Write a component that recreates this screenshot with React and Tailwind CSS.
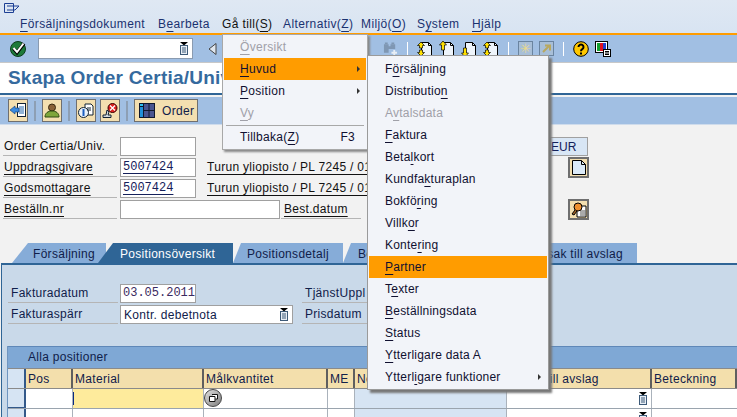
import React from "react";

const U = ({ children }) => <span className="underline decoration-1 underline-offset-[3px]">{children}</span>;

const Pad = ({ className = "" }) => (
  <svg width="10" height="13" viewBox="0 0 10 13" className={className}>
    <path d="M1 0h8L5 3.500z" fill="#000" />
    <rect x="1.500" y="3.500" width="7" height="9" fill="#e8eef5" stroke="#3d5a78" />
    <path d="M3 6h4M3 8h4M3 10h4" stroke="#3d5a78" />
  </svg>
);

const Check = () => (
  <svg width="18" height="18" viewBox="0 0 18 18">
    <circle cx="9" cy="9" r="7.500" fill="#1d7a3a" stroke="#0c3d1c" />
    <path d="M4.500 8.500l3.500 4L15 3.500" fill="none" stroke="#000" strokeWidth="3.400" />
    <path d="M4.500 8l3.500 4L14.500 3.500" fill="none" stroke="#fff" strokeWidth="2" />
  </svg>
);

const Doc = ({ arrow }) => (
  <svg width="16" height="16" viewBox="0 0 16 16">
    <path d="M4.500 1.500h7l3 3v10h-10z" fill="#eef4fb" stroke="#000" />
    <path d="M11.500 1.500v3h3" fill="none" stroke="#000" />
    {(arrow === "up" || arrow === "both") && <path d={arrow === "both" ? "M4 1l3.500 3.500H5.500V7h-3V4.500H.5z" : "M4 0l3.500 4H5.500v5h-3V4H.5z"} fill="#ffe000" stroke="#000" strokeWidth=".7" />}
    {(arrow === "down" || arrow === "both") && <path d={arrow === "both" ? "M4 15L.5 11.500h2V9h3v2.500h2z" : "M4 16L.5 12h2V7h3v5h2z"} fill="#ffe000" stroke="#000" strokeWidth=".7" />}
  </svg>
);

const Btn = ({ children, className = "w-[20px]" }) => (
  <div className={`h-[23px] flex items-center justify-center bg-[#f3dfb0] border border-[#6f6f6f] ${className}`}>{children}</div>
);

const Sep = ({ className = "h-[20px] bg-[#7f8c9c]" }) => <div className={`w-[2px] ${className}`} />;

const Lbl = ({ children, w = "w-[114px]", cls = "" }) => (
  <div className={`${w} ${cls} h-[19px] border-b border-[#b5b5b5] pl-[1px] leading-[19px] whitespace-nowrap overflow-hidden shrink-0`}>{children}</div>
);

const Input = ({ children, w = "w-[76px]", cls = "" }) => (
  <div className={`${w} ${cls} h-[19px] bg-white border border-[#a0a0a0] pl-[2px] font-['Liberation_Mono',monospace] text-[12px] tracking-normal leading-[17px] text-[#14205a] shrink-0 overflow-hidden`}>{children}</div>
);

const Tab = ({ children, w, active, cls = "" }) => (
  <div className={`${w} ${cls} h-[20px] shrink-0 leading-[22px] whitespace-nowrap overflow-hidden ${active ? "bg-[#2f6596] text-white" : "bg-[#86acd8] text-[#10204a]"}`}>{children}</div>
);

const Item = ({ children, active, disabled, arrow, right }) => (
  <div className={`h-[22px] pl-[16px] pr-[6px] flex items-center justify-between leading-[22px] ${active ? "bg-[#ff9c00]" : ""} ${disabled ? "text-[#a0a0a8]" : "text-[#101030]"}`}>
    <span>{children}</span>
    {arrow && <span className="w-0 h-0 border-y-[3px] border-y-transparent border-l-[3px] border-l-[#333]" />}
    {right && <span className="pr-[5px]">{right}</span>}
  </div>
);

const HCell = ({ children, cls = "" }) => (
  <div className={`h-[19px] bg-[#f3dfac] border-r-[2px] border-[#5f5f5f] pl-[2px] leading-[20px] overflow-hidden whitespace-nowrap text-[#10204a] ${cls}`}>{children}</div>
);

const grid = "grid grid-cols-[18px_47px_131px_124px_27px_152px_145px_1fr]";

export default function App() {
  return (
    <div className="relative w-[737px] h-[417px] overflow-hidden bg-[#f2f2f2] font-['Liberation_Sans',Arial,sans-serif] text-[12px] tracking-[0.3px] text-[#111] flex flex-col">
      {/* menu bar */}
      <div className="h-[35px] shrink-0 bg-gradient-to-b from-[#dfe8f3] to-[#d8e4f2] border-b-[2px] border-[#ff9c00] relative text-[#1a3270] tracking-[0.38px]">
        <svg width="16" height="11" viewBox="0 0 16 11" className="absolute left-[4px] top-[3px]">
          <path d="M.5.500h9v9h-9zM3 3h12l-4 4H3" fill="none" stroke="#1c3f94" />
        </svg>
        <div className="flex pt-[16px] pl-[20px] leading-[16px] whitespace-nowrap">
          <span className="w-[138px]"><U>F</U>örsäljningsdokument</span>
          <span className="w-[64px]">B<U>e</U>arbeta</span>
          <span className="w-[61px] text-[#111]">Gå till(<U>S</U>)</span>
          <span className="w-[78px]">Alternativ(<U>Z</U>)</span>
          <span className="w-[56px]">Miljö(<U>O</U>)</span>
          <span className="w-[55px]">S<U>y</U>stem</span>
          <span><U>H</U>jälp</span>
        </div>
      </div>

      {/* system toolbar */}
      <div className="h-[27px] shrink-0 bg-[#a1bfe3] flex items-center pl-[9px]">
        <Check />
        <div className="ml-[11px] w-[155px] h-[21px] bg-white border border-[#8a9bb0] flex items-center justify-end pr-[3px]"><Pad /></div>
        <svg width="9" height="12" viewBox="0 0 9 12" className="ml-[15px]"><path d="M8 .5v11L1 6z" fill="#dfe6ee" stroke="#444" /></svg>
        <div className="ml-[166px] w-[15px] flex justify-center">
          <svg width="16" height="16" viewBox="0 0 16 16"><path d="M1 3h5v9H1zM8 3h5v5H8z" fill="#7f97b3" /><path d="M2 1h3v2H2zM9 1h3v2H9zM5 5h4v3H5z" fill="#7f97b3" /><path d="M11 9h2v2h2v2h-2v2h-2v-2H9v-2h2z" fill="#e8eef5" /></svg>
        </div>
        <Sep className="h-[14px] bg-white ml-[9px] !w-[1px]" />
        <div className="ml-[9px]"><Doc arrow="both" /></div>
        <div className="ml-[6px]"><Doc arrow="up" /></div>
        <div className="ml-[6px]"><Doc arrow="down" /></div>
        <div className="ml-[6px]"><Doc arrow="both" /></div>
        <Sep className="h-[14px] bg-white ml-[9px] !w-[1px]" />
        <div className="ml-[9px] w-[15px] h-[15px] border border-[#6a84a0] bg-[#a8bfd8] flex items-center justify-center text-[#e8d98a] text-[13px] leading-none tracking-normal">✳</div>
        <div className="ml-[6px] w-[15px] h-[15px] border border-[#6a84a0] bg-[#a8bfd8] flex items-center justify-center">
          <svg width="11" height="11" viewBox="0 0 11 11"><path d="M2 9l6-6M4 2.500h5v5" fill="none" stroke="#b8a860" strokeWidth="2" /></svg>
        </div>
        <Sep className="h-[14px] bg-white ml-[9px] !w-[1px]" />
        <svg width="16" height="16" viewBox="0 0 16 16" className="ml-[9px]">
          <circle cx="8" cy="8" r="7.300" fill="#ffc800" stroke="#000" />
          <path d="M5.500 6a2.500 2.500 0 1 1 3.800 2.200c-1 .6-1.300 1-1.300 2" fill="none" stroke="#000" strokeWidth="2" />
          <rect x="7" y="11.500" width="2" height="2" fill="#000" />
        </svg>
        <svg width="16" height="16" viewBox="0 0 16 16" className="ml-[6px]">
          <rect x=".5" y=".5" width="12" height="11" fill="#fff" stroke="#000" />
          <rect x="2" y="2" width="3" height="8" fill="#12a030" /><rect x="5" y="2" width="3" height="8" fill="#e01020" /><rect x="8" y="2" width="3" height="8" fill="#2040d0" />
          <rect x="8.500" y="8.500" width="7" height="7" fill="#fff" stroke="#000" /><path d="M10 10.500h4M10 12h4M10 13.500h4" stroke="#000" />
        </svg>
      </div>

      {/* title */}
      <div className="h-[33px] shrink-0 bg-white border-t border-[#c8c8c8] border-b-[2px] border-b-[#2f6596] pl-[8px] text-[#356a9e] font-bold text-[19px] tracking-[0.2px] leading-[30px] whitespace-nowrap">
        Skapa Order Certia/Univ
      </div>

      {/* application toolbar */}
      <div className="mt-[2px] h-[28px] shrink-0 bg-[#a1bfe3] border-b border-[#cfdcec] flex items-center pl-[8px] text-[#10204a]">
        <Btn>
          <svg width="16" height="15" viewBox="0 0 16 15"><rect x="7.500" y=".5" width="8" height="13" fill="#fff" stroke="#123" /><path d="M9 4h5M9 6h5M9 8h5M9 10h5" stroke="#26a" /><path d="M0 7l5-4v2h4v4H5v2z" fill="#3b8be0" stroke="#0a3a7a" strokeWidth=".6" /></svg>
        </Btn>
        <Sep className="h-[20px] bg-[#8d9fb4] ml-[6px] !w-[2px]" />
        <Btn className="w-[20px] ml-[6px]">
          <svg width="16" height="15" viewBox="0 0 16 15"><circle cx="8" cy="4.500" r="3.500" fill="#8a6238" stroke="#3a2a10" /><path d="M1 14c0-4 3-6 7-6s7 2 7 6z" fill="#7ea63a" stroke="#2d4a10" /></svg>
        </Btn>
        <Sep className="h-[20px] bg-[#8d9fb4] ml-[6px] !w-[2px]" />
        <Btn className="w-[20px] ml-[6px]">
          <svg width="16" height="16" viewBox="0 0 16 16"><path d="M7 1h6l2 2v9H7z" fill="#fff" stroke="#123" /><circle cx="5.500" cy="9.500" r="5" fill="#eaf2fb" stroke="#123" /><path d="M5.500 6v7" stroke="#1b5fc0" strokeWidth="2" /><path d="M9 5h4M9 7h4" stroke="#123" /></svg>
        </Btn>
        <Btn className="w-[20px] ml-[4px]">
          <svg width="16" height="16" viewBox="0 0 16 16"><circle cx="10.500" cy="5" r="4.500" fill="#e02020" stroke="#300" /><path d="M8 2.500l5 5M13 2.500l-5 5" stroke="#fff" strokeWidth="1.300" /><path d="M5 7l2 2-1 3h3v2.500H1V12h3z" fill="#cfd8e0" stroke="#123" /></svg>
        </Btn>
        <Sep className="h-[20px] bg-[#8d9fb4] ml-[6px] !w-[2px]" />
        <Btn className="w-[64px] ml-[6px] !justify-start pl-[4px] gap-[7px]">
          <svg width="16" height="15" viewBox="0 0 16 15"><rect width="16" height="15" fill="#10182e" /><rect x="1" y="1" width="3" height="2" fill="#2fc0f0" /><rect x="1" y="4" width="3" height="10" fill="#2090d8" /><rect x="5" y="1" width="4.500" height="6" fill="#4a5590" /><rect x="10.500" y="1" width="4.500" height="6" fill="#4a5590" /><rect x="5" y="8" width="4.500" height="6" fill="#4a5590" /><rect x="10.500" y="8" width="4.500" height="6" fill="#4a5590" /></svg>
          Order
        </Btn>
      </div>

      {/* header form */}
      <div className="h-[118px] shrink-0 relative pt-[12px] pl-[3px]">
        <div className="flex gap-[3px]"><Lbl>Order Certia/Univ.</Lbl><Input /></div>
        <div className="mt-[2px] flex gap-[3px] items-start">
          <Lbl><U>Uppdragsgivare</U></Lbl><Input><U>5007424</U></Input>
          <span className="ml-[8px] leading-[19px] whitespace-nowrap"><U>Turun yliopisto / PL 7245 / 010</U></span>
        </div>
        <div className="mt-[2px] flex gap-[3px] items-start">
          <Lbl><U>Godsmottagare</U></Lbl><Input><U>5007424</U></Input>
          <span className="ml-[8px] leading-[19px] whitespace-nowrap"><U>Turun yliopisto / PL 7245 / 010</U></span>
        </div>
        <div className="mt-[2px] flex gap-[3px] items-start">
          <Lbl><U>Beställn.nr</U></Lbl><Input w="w-[160px]" />
          <Lbl w="w-[80px]" cls="pl-[3px] -ml-[2px]"><U>Best.datum</U></Lbl>
        </div>
        {/* right column */}
        <div className="absolute left-[550px] top-[12px] w-[38px] h-[19px] bg-[#d8e6f5] border border-[#a0a0a0] leading-[18px] text-[#14205a] tracking-normal">EUR</div>
        <div className="absolute left-[568px] top-[32px]">
          <Btn className="w-[21px] !h-[21px] border-2">
            <svg width="14" height="15" viewBox="0 0 14 15"><path d="M.5.5h9l4 4v10H.5z" fill="#dbeaf8" stroke="#000" /><path d="M9.500.5v4h4" fill="none" stroke="#000" /></svg>
          </Btn>
        </div>
        <div className="absolute left-[568px] top-[74px]">
          <Btn className="w-[21px] !h-[21px] border-2">
            <svg width="16" height="16" viewBox="0 0 16 16"><path d="M6 4h9v11H6z" fill="#fff" stroke="#000" /><path d="M9 9h5M9 11h5M9 13h5" stroke="#555" /><circle cx="7" cy="5" r="4" fill="#f09030" stroke="#000" /><path d="M4 8l-3 4 2 1 3-4" fill="#a06020" stroke="#000" /></svg>
          </Btn>
        </div>
      </div>

      {/* tabs */}
      <div className="h-[20px] shrink-0 flex pl-[12px] overflow-hidden">
        <Tab w="w-[94px]" cls="pl-[21px] [clip-path:polygon(16px_0,100%_0,100%_100%,0_100%)]">Försäljning</Tab>
        <Tab w="w-[135px]" active cls="-ml-[8px] pl-[22px] [clip-path:polygon(15px_0,100%_0,100%_100%,0_100%)]">Positionsöversikt</Tab>
        <Tab w="w-[110px]" cls="pl-[14px] [clip-path:polygon(8px_0,100%_0,100%_100%,0_100%)]">Positionsdetalj</Tab>
        <Tab w="w-[144px]" cls="pl-[15px] [clip-path:polygon(8px_0,100%_0,100%_100%,0_100%)]">Beställare</Tab>
        <Tab w="w-[150px]" cls="text-right pr-[14px]">Orsak till avslag</Tab>
      </div>

      {/* panel */}
      <div className="flex-1 ml-[1px] border-t-[2px] border-l border-[#2f6596] bg-[#c9d9e9] pt-[19px] pl-[6px] text-[#10204a] min-h-0 overflow-hidden">
        <div className="flex">
          <Lbl w="w-[110px]" cls="pl-[3px]">Fakturadatum</Lbl>
          <Input cls="ml-[2px] !text-[#3a2a60]">03.05.2011</Input>
          <Lbl w="w-[80px]" cls="ml-[106px] pl-[3px]">TjänstUppl</Lbl>
        </div>
        <div className="flex mt-[2px]">
          <Lbl w="w-[110px]" cls="pl-[3px]">Fakturaspärr</Lbl>
          <div className="ml-[2px] w-[173px] h-[19px] bg-white border border-[#a0a0a0] pl-[3px] pr-[3px] flex items-center justify-between"><span>Kontr. debetnota</span><Pad /></div>
          <Lbl w="w-[80px]" cls="ml-[9px] pl-[3px]">Prisdatum</Lbl>
        </div>

        {/* table */}
        <div className="mt-[22px] ml-[-1px] border-l border-[#6f95c0]">
          <div className="h-[22px] bg-[#7fa8d5] border-t border-[#5f88b8] pl-[20px] leading-[21px]">Alla positioner</div>
          <div className={`${grid} bg-[#8a8a8a] pt-[1px] pb-[1px]`}>
            <div className="h-[19px] bg-[#d6e4f3] border-r-[2px] border-[#33598a]" />
            <HCell>Pos</HCell>
            <HCell>Material</HCell>
            <HCell>Målkvantitet</HCell>
            <HCell>ME</HCell>
            <HCell>Nettovärde</HCell>
            <HCell>Orsak till avslag</HCell>
            <HCell cls="border-r-0">Beteckning</HCell>
          </div>
          <div className={`${grid} h-[20px] border-b border-[#9aa4ae]`}>
            <div className="bg-[#d6e4f3] border-r-[2px] border-b-[1px] border-[#33598a]" />
            <div className="bg-white border-r border-[#aab2bb]" />
            <div className="bg-[#feeb9c] border-r border-[#aab2bb] relative"><div className="absolute left-0 top-[3px] w-[1px] h-[13px] bg-[#0a2a80]" /></div>
            <div className="bg-white border-r border-[#aab2bb] relative">
              <div className="absolute left-[0px] top-[0px] w-[18px] h-[18px] rounded-full bg-gradient-to-br from-[#e0e0e0] to-[#808080] border border-[#444] flex items-center justify-center">
                <svg width="9" height="8" viewBox="0 0 9 8"><path d="M3 .5h5.500v4.500H6.500M.5 2.500H6v5H.5z" fill="#fff" stroke="#111" /></svg>
              </div>
            </div>
            <div className="bg-white border-r border-[#aab2bb]" />
            <div className="bg-[#d6e4f3] border-r border-[#aab2bb]" />
            <div className="bg-white border-r border-[#aab2bb] flex justify-end items-start pr-[3px] pt-[3px]"><Pad /></div>
            <div className="bg-white" />
          </div>
          <div className={`${grid} h-[20px]`}>
            <div className="bg-[#d6e4f3] border-r-[2px] border-[#33598a]" />
            <div className="bg-white border-r border-[#aab2bb]" />
            <div className="bg-white border-r border-[#aab2bb]" />
            <div className="bg-white border-r border-[#aab2bb]" />
            <div className="bg-white border-r border-[#aab2bb]" />
            <div className="bg-[#d6e4f3] border-r border-[#aab2bb]" />
            <div className="bg-white border-r border-[#aab2bb] flex justify-end items-start pr-[3px] pt-[3px]"><Pad /></div>
            <div className="bg-white" />
          </div>
        </div>
      </div>

      {/* Gå till menu */}
      <div className="absolute left-[222px] top-[34px] w-[146px] h-[116px] bg-[#f2f4f9] border border-[#a8a8a8] pt-[1px] px-[1px] shadow-[2px_2px_2px_#888]">
        <Item disabled><U>Ö</U>versikt</Item>
        <Item active arrow><U>H</U>uvud</Item>
        <Item arrow><U>P</U>osition</Item>
        <Item disabled><U>V</U>y</Item>
        <div className="mx-[2px] mt-[1px] h-[1px] bg-[#a8a8a8]" />
        <Item right="F3">Tillbaka(<U>Z</U>)</Item>
      </div>

      {/* Huvud submenu */}
      <div className="absolute left-[367px] top-[55px] w-[182px] bg-[#f2f4f9] border border-[#9a9a9a] pt-[2px] pb-[1px] px-[1px] shadow-[3px_3px_2px_#777] tracking-[0.22px]">
        <Item>F<U>ö</U>rsäljning</Item>
        <Item>Distributio<U>n</U></Item>
        <Item disabled>A<U>v</U>talsdata</Item>
        <Item><U>F</U>aktura</Item>
        <Item>Beta<U>l</U>kort</Item>
        <Item>Kundfa<U>k</U>turaplan</Item>
        <Item>Bokfö<U>r</U>ing</Item>
        <Item>Villk<U>o</U>r</Item>
        <Item>Konte<U>r</U>ing</Item>
        <Item active><U>P</U>artner</Item>
        <Item>T<U>e</U>xter</Item>
        <Item><U>B</U>eställningsdata</Item>
        <Item><U>S</U>tatus</Item>
        <Item><U>Y</U>tterligare data A</Item>
        <Item arrow>Ytterl<U>i</U>gare funktioner</Item>
      </div>
    </div>
  );
}
